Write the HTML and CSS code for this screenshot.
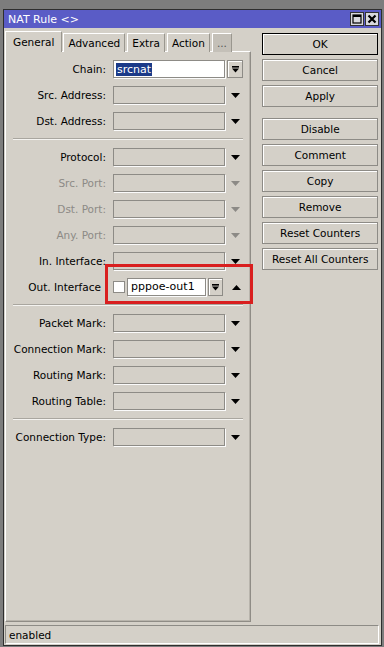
FILE: index.html
```html
<!DOCTYPE html>
<html lang="en">
<head>
  <meta charset="UTF-8">
  <title>NAT Rule</title>
  <link rel="stylesheet" href="styles.css">
</head>
<body>
  <div class="window">
    <div class="titlebar">
      <span class="title">NAT Rule &lt;&gt;</span>
      <div class="tb-btns">
        <span class="tb-btn"><svg width="10" height="10" viewBox="0 0 10 10"><rect x="1" y="1" width="8" height="8" fill="none" stroke="#000" stroke-width="1.2"/><rect x="1" y="1" width="8" height="2" fill="#000"/></svg></span>
        <span class="tb-btn"><svg width="10" height="10" viewBox="0 0 10 10"><path d="M1.5 1.5l7 7M8.5 1.5l-7 7" stroke="#000" stroke-width="2.2"/></svg></span>
      </div>
    </div>

    <div class="main">
      <div class="left">
        <ul class="tabs">
          <li class="active">General</li>
          <li>Advanced</li>
          <li>Extra</li>
          <li>Action</li>
          <li class="more">...</li>
        </ul>
        <div class="panel">
          <div class="row">
            <span class="lbl">Chain:</span>
            <div class="field white"><span class="selected">srcnat</span></div>
            <span class="dd-btn"><svg width="9" height="9" viewBox="0 0 9 9"><rect x="1" y="1" width="7" height="1.6"/><polygon points="1,3.6 8,3.6 4.5,7.6"/></svg></span>
          </div>
          <div class="row">
            <span class="lbl">Src. Address:</span>
            <div class="field"></div>
            <span class="arrow"><svg width="9" height="5" viewBox="0 0 9 5"><polygon points="0,0 9,0 4.5,5"/></svg></span>
          </div>
          <div class="row">
            <span class="lbl">Dst. Address:</span>
            <div class="field"></div>
            <span class="arrow"><svg width="9" height="5" viewBox="0 0 9 5"><polygon points="0,0 9,0 4.5,5"/></svg></span>
          </div>

          <div class="sep"></div>

          <div class="row">
            <span class="lbl">Protocol:</span>
            <div class="field"></div>
            <span class="arrow"><svg width="9" height="5" viewBox="0 0 9 5"><polygon points="0,0 9,0 4.5,5"/></svg></span>
          </div>
          <div class="row disabled">
            <span class="lbl">Src. Port:</span>
            <div class="field"></div>
            <span class="arrow"><svg width="9" height="5" viewBox="0 0 9 5"><polygon points="0,0 9,0 4.5,5"/></svg></span>
          </div>
          <div class="row disabled">
            <span class="lbl">Dst. Port:</span>
            <div class="field"></div>
            <span class="arrow"><svg width="9" height="5" viewBox="0 0 9 5"><polygon points="0,0 9,0 4.5,5"/></svg></span>
          </div>
          <div class="row disabled">
            <span class="lbl">Any. Port:</span>
            <div class="field"></div>
            <span class="arrow"><svg width="9" height="5" viewBox="0 0 9 5"><polygon points="0,0 9,0 4.5,5"/></svg></span>
          </div>
          <div class="row">
            <span class="lbl">In. Interface:</span>
            <div class="field"></div>
            <span class="arrow"><svg width="9" height="5" viewBox="0 0 9 5"><polygon points="0,0 9,0 4.5,5"/></svg></span>
          </div>
          <div class="row">
            <span class="lbl out">Out. Interface</span>
            <span class="check"></span>
            <div class="field white short">pppoe-out1</div>
            <span class="dd-btn small"><svg width="9" height="9" viewBox="0 0 9 9"><rect x="1" y="1" width="7" height="1.6"/><polygon points="1,3.6 8,3.6 4.5,7.6"/></svg></span>
            <span class="arrow up"><svg width="9" height="5" viewBox="0 0 9 5"><polygon points="0,5 9,5 4.5,0"/></svg></span>
          </div>

          <div class="sep"></div>

          <div class="row">
            <span class="lbl">Packet Mark:</span>
            <div class="field"></div>
            <span class="arrow"><svg width="9" height="5" viewBox="0 0 9 5"><polygon points="0,0 9,0 4.5,5"/></svg></span>
          </div>
          <div class="row">
            <span class="lbl">Connection Mark:</span>
            <div class="field"></div>
            <span class="arrow"><svg width="9" height="5" viewBox="0 0 9 5"><polygon points="0,0 9,0 4.5,5"/></svg></span>
          </div>
          <div class="row">
            <span class="lbl">Routing Mark:</span>
            <div class="field"></div>
            <span class="arrow"><svg width="9" height="5" viewBox="0 0 9 5"><polygon points="0,0 9,0 4.5,5"/></svg></span>
          </div>
          <div class="row">
            <span class="lbl">Routing Table:</span>
            <div class="field"></div>
            <span class="arrow"><svg width="9" height="5" viewBox="0 0 9 5"><polygon points="0,0 9,0 4.5,5"/></svg></span>
          </div>

          <div class="sep"></div>

          <div class="row">
            <span class="lbl">Connection Type:</span>
            <div class="field"></div>
            <span class="arrow"><svg width="9" height="5" viewBox="0 0 9 5"><polygon points="0,0 9,0 4.5,5"/></svg></span>
          </div>

          <div class="highlight"></div>
        </div>
      </div>

      <div class="actions">
        <div class="btn default">OK</div>
        <div class="btn">Cancel</div>
        <div class="btn">Apply</div>
        <div class="btn gap">Disable</div>
        <div class="btn">Comment</div>
        <div class="btn">Copy</div>
        <div class="btn">Remove</div>
        <div class="btn">Reset Counters</div>
        <div class="btn">Reset All Counters</div>
      </div>
    </div>

    <div class="status">enabled</div>
  </div>
</body>
</html>
```

FILE: styles.css
```css
* {
  margin: 0;
  padding: 0;
  box-sizing: border-box;
}
li {
  list-style: none;
}
body {
  background-color: #7d7d7d;
  font-family: "DejaVu Sans", "Liberation Sans", sans-serif;
  font-size: 10.5px;
  color: #000;
  overflow: hidden;
}
.window {
  margin: 9px 0 0 3px;
  width: 379px;
  height: 637px;
  border: 1px solid #2e2e2e;
  background-color: #d4d0c8;
  display: flex;
  flex-direction: column;
}

/* title bar */
.titlebar {
  height: 18px;
  background-color: #5a5cc6;
  display: flex;
  align-items: center;
  justify-content: space-between;
  padding: 0 2px 0 4px;
}
.title {
  color: #fff;
  font-size: 11px;
}
.tb-btns {
  display: flex;
  gap: 1px;
}
.tb-btn {
  width: 14px;
  height: 14px;
  border: 1px solid #333;
  background-color: #d8d8dc;
  display: flex;
  align-items: center;
  justify-content: center;
}

/* main area */
.main {
  flex: 1;
  display: flex;
  padding: 3px 3px 0 1px;
  gap: 11px;
}
.left {
  width: 247px;
  display: flex;
  flex-direction: column;
}
.tabs {
  display: flex;
  align-items: flex-end;
  height: 21px;
  margin-bottom: -1px;
  position: relative;
  z-index: 1;
}
.tabs li {
  height: 19px;
  line-height: 18px;
  padding: 0 4px;
  margin-left: 2px;
  border: 1px solid #9a978f;
  border-bottom: none;
  border-top-color: #fff;
  border-left-color: #fff;
  background-color: #d4d0c8;
}
.tabs li.active {
  height: 21px;
  line-height: 20px;
  padding: 0 7px;
  margin-left: 0;
  margin-right: -1px;
}
.tabs li.more {
  background-color: #c4c0b8;
  color: #555;
}
.panel {
  flex: 1;
  position: relative;
  border: 1px solid #8f8c86;
  border-top-color: #fff;
  border-left-color: #fff;
  box-shadow: inset -1px -1px 0 #b8b4ac;
  padding-top: 8px;
  display: flex;
  flex-direction: column;
  gap: 8px;
}

/* form rows */
.row {
  display: flex;
  align-items: center;
  height: 18px;
}
.lbl {
  width: 100px;
  margin-right: 7px;
  text-align: right;
  white-space: nowrap;
}
.lbl.out {
  padding-right: 5px;
}
.row.disabled .lbl {
  color: #8c8a86;
}
.field {
  width: 112px;
  height: 18px;
  border: 1px solid #8d8b86;
  box-shadow: 1px 1px 0 #fbfbfb;
  background-color: #d4d0c8;
  line-height: 16px;
  padding-left: 2px;
  overflow: hidden;
  white-space: nowrap;
}
.field.white {
  background-color: #fff;
}
.field.short {
  width: 79px;
  font-size: 11px;
  padding-left: 3px;
}
.selected {
  display: inline-block;
  background-color: #1b3a88;
  color: #fff;
  font-size: 11px;
  line-height: 13px;
  padding: 0 1px;
}
.dd-btn {
  width: 16px;
  height: 18px;
  margin-left: 2px;
  border: 1px solid #8d8b86;
  box-shadow: inset 1px 1px 0 #fff;
  display: flex;
  align-items: center;
  justify-content: center;
}
.dd-btn.small {
  width: 15px;
}
.arrow {
  width: 18px;
  display: flex;
  justify-content: center;
  padding-left: 2px;
}
.arrow.up {
  width: auto;
  padding-left: 9px;
}
.row.disabled .arrow svg {
  fill: #8c8a86;
}
.check {
  width: 12px;
  height: 12px;
  margin-right: 2px;
  border: 1px solid #8d8b86;
  background-color: #fff;
}
.sep {
  height: 2px;
  margin: 0 7px;
  border-top: 1px solid #a9a69f;
  border-bottom: 1px solid #f4f3f0;
}
.highlight {
  position: absolute;
  left: 99px;
  top: 212px;
  width: 148px;
  height: 40px;
  border: 3px solid #d91f1f;
}

/* buttons */
.actions {
  width: 116px;
  display: flex;
  flex-direction: column;
  gap: 4px;
  padding-top: 2px;
}
.btn {
  height: 22px;
  line-height: 20px;
  text-align: center;
  border: 1px solid #8d8b86;
  box-shadow: inset 1px 1px 0 #fff;
  white-space: nowrap;
}
.btn.default {
  border-color: #000;
}
.btn.gap {
  margin-top: 7px;
}

/* status bar */
.status {
  margin: 3px 2px 1px 1px;
  height: 19px;
  line-height: 18px;
  padding-left: 3px;
  border: 1px solid #8d8b86;
  border-right-color: #fff;
  border-bottom-color: #fff;
}
```
